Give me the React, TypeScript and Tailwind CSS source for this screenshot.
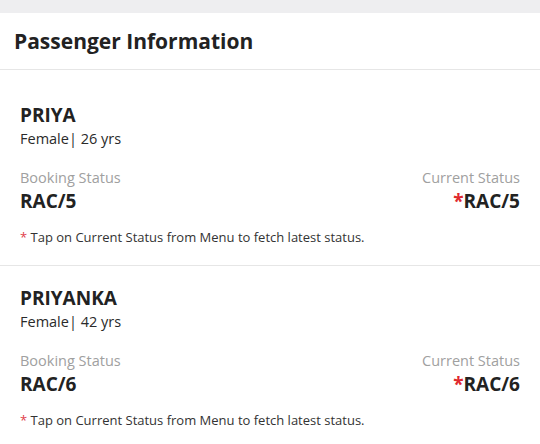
import React from "react";

const passengers = [
  { name: "PRIYA", info: "Female| 26 yrs", booking: "RAC/5", current: "RAC/5" },
  { name: "PRIYANKA", info: "Female| 42 yrs", booking: "RAC/6", current: "RAC/6" },
];

export default function App() {
  return (
    <div className="w-[540px] h-[444px] overflow-hidden bg-white text-[#222]" style={{ fontFamily: '"Open Sans", sans-serif' }}>
      <div className="h-[13px] bg-[#eeeef0]" />
      <div className="h-[57px] flex items-center px-[14px] border-b border-[#e6e6e6]">
        <h1 className="text-[21px] font-bold leading-none">Passenger Information</h1>
      </div>
      {passengers.map((p, i) => (
        <div key={i} className={`px-[20px] pb-[19px] ${i === 0 ? "pt-[33px] border-b border-[#e6e6e6]" : "pt-[20px]"}`}>
          <div className="text-[19px] font-bold leading-[24px]">{p.name}</div>
          <div className="text-[14.5px] leading-[22px] mt-[1px] text-[#2a2a2a]">{p.info}</div>
          <div className="flex justify-between mt-[18px]">
            <div>
              <div className="text-[14.5px] leading-[20px] text-[#a0a0a0]">Booking Status</div>
              <div className="text-[19px] font-bold leading-[24px] mt-[1px]">{p.booking}</div>
            </div>
            <div className="text-right">
              <div className="text-[14.5px] leading-[20px] text-[#a0a0a0]">Current Status</div>
              <div className="text-[19px] font-bold leading-[24px] mt-[1px]"><span className="text-[#e0282e]">*</span>{p.current}</div>
            </div>
          </div>
          <div className="text-[13px] leading-[18px] mt-[15px] text-[#333]"><span className="text-[#e0404a]">*</span> Tap on Current Status from Menu to fetch latest status.</div>
        </div>
      ))}
    </div>
  );
}
